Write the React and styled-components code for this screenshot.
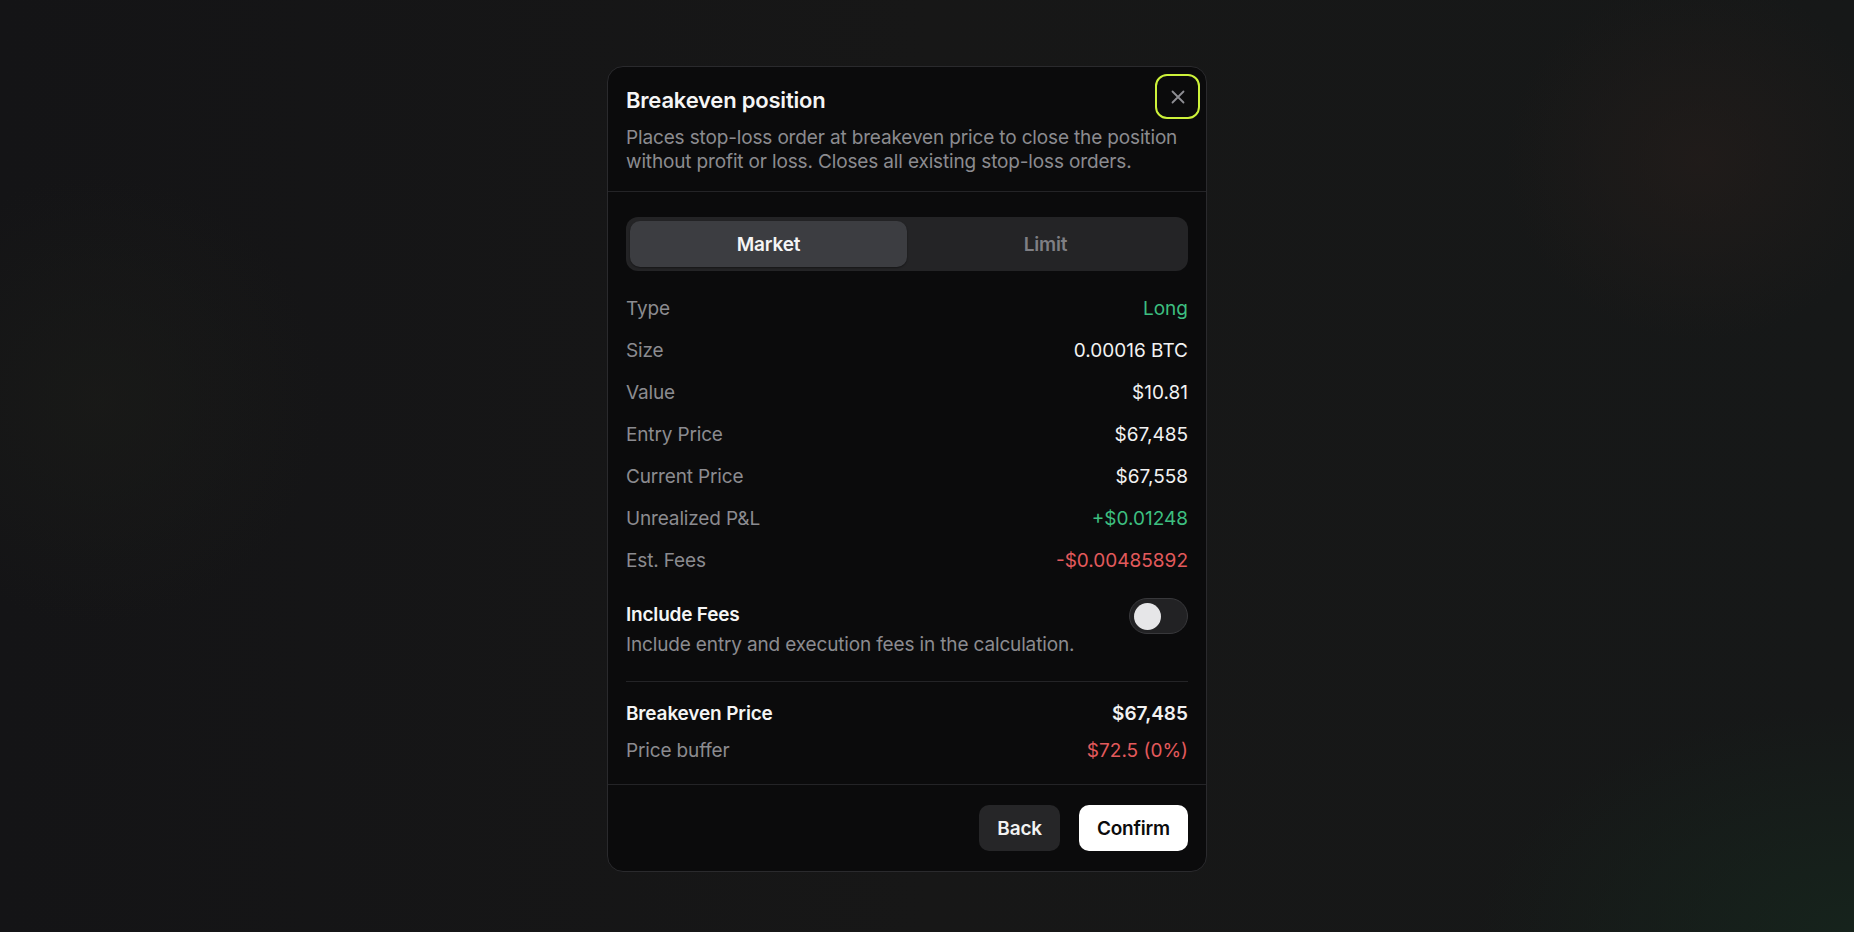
import React from "react";
import styled, { createGlobalStyle } from "styled-components";

const GlobalStyle = createGlobalStyle`
  * { box-sizing: border-box; }
  html, body {
    margin: 0;
    padding: 0;
    background: #141416;
    font-family: Inter, "Noto Sans", sans-serif;
    -webkit-font-smoothing: antialiased;
  }
`;

const Page = styled.div`
  min-height: 932px;
  display: flex;
  justify-content: center;
  align-items: flex-start;
  padding: 66px 40px 0 0;
  background:
    radial-gradient(ellipse 260px 240px at 1700px 160px, rgba(34, 28, 26, 0.8), transparent 75%),
    radial-gradient(ellipse 500px 300px at 1854px 932px, rgba(22, 40, 30, 0.7), transparent 75%),
    radial-gradient(ellipse 300px 300px at 100px 400px, rgba(26, 27, 24, 0.7), transparent 75%),
    linear-gradient(90deg, #141416 0%, #171717 50%, #161818 100%);
`;

const Modal = styled.div`
  position: relative;
  width: 600px;
  background: #0b0b0c;
  border: 1px solid #2a2a2d;
  border-radius: 16px;
  color: #f2f2f2;
`;

const Header = styled.div`
  padding: 18px 18px 17px;
  border-bottom: 1px solid #242427;
`;

const Title = styled.h2`
  margin: 0;
  font-size: 22px;
  line-height: 30px;
  font-weight: 600;
  letter-spacing: -0.2px;
  color: #f5f5f5;
`;

const Description = styled.p`
  margin: 11px 0 0;
  font-size: 19px;
  line-height: 24px;
  letter-spacing: -0.15px;
  color: #8b8b90;
`;

const CloseButton = styled.button`
  position: absolute;
  top: 7px;
  right: 6px;
  width: 45px;
  height: 45px;
  border: 2px solid #cdf23a;
  border-radius: 12px;
  background: transparent;
  display: flex;
  align-items: center;
  justify-content: center;
  padding: 0;
  cursor: pointer;
`;

const Body = styled.div`
  padding: 25px 18px 12px;
  border-bottom: 1px solid #242427;
`;

const Tabs = styled.div`
  display: grid;
  grid-template-columns: 1fr 1fr;
  padding: 4px;
  height: 54px;
  background: #242426;
  border-radius: 12px;
  margin-bottom: 16px;
`;

const Tab = styled.div`
  display: flex;
  align-items: center;
  justify-content: center;
  border-radius: 10px;
  font-size: 19px;
  font-weight: 600;
  letter-spacing: -0.2px;
  background: ${(p) => (p.$active ? "#3c3d41" : "transparent")};
  color: ${(p) => (p.$active ? "#f5f5f5" : "#7f7f84")};
  box-shadow: ${(p) => (p.$active ? "0 1px 2px rgba(0,0,0,0.4)" : "none")};
`;

const Row = styled.div`
  display: flex;
  justify-content: space-between;
  align-items: center;
  height: ${(p) => p.$h || 42}px;
  font-size: 19px;
`;

const Label = styled.span`
  color: ${(p) => (p.$strong ? "#f5f5f5" : "#8b8b90")};
  font-weight: ${(p) => (p.$strong ? 600 : 400)};
  letter-spacing: -0.15px;
`;

const Value = styled.span`
  color: ${(p) =>
    p.$tone === "green" ? "#3dbf80" : p.$tone === "red" ? "#e35a5c" : "#f2f2f2"};
  font-weight: ${(p) => (p.$strong ? 600 : 400)};
`;

const FeeBlock = styled.div`
  display: flex;
  justify-content: space-between;
  align-items: flex-start;
  margin-top: 20px;
  padding-bottom: 24px;
  border-bottom: 1px solid #242427;
`;

const FeeText = styled.div`
  display: flex;
  flex-direction: column;
`;

const FeeTitle = styled.span`
  font-size: 19px;
  line-height: 28px;
  font-weight: 600;
  letter-spacing: -0.2px;
  color: #f5f5f5;
`;

const FeeHint = styled.span`
  font-size: 19px;
  line-height: 24px;
  margin-top: 4px;
  letter-spacing: -0.15px;
  color: #8b8b90;
`;

const Toggle = styled.div`
  width: 59px;
  height: 36px;
  margin-top: -3px;
  border-radius: 18px;
  background: #222224;
  border: 1px solid #38383b;
  display: flex;
  align-items: center;
  padding: 0 4px;
`;

const Knob = styled.div`
  width: 27px;
  height: 27px;
  border-radius: 50%;
  background: #e6e6e8;
`;

const Summary = styled.div`
  padding-top: 16px;
`;

const Footer = styled.div`
  display: flex;
  justify-content: flex-end;
  gap: 19px;
  padding: 20px 18px;
`;

const Button = styled.button`
  height: 46px;
  padding: 0 18px;
  border: none;
  border-radius: 10px;
  font-family: Inter, "Noto Sans", sans-serif;
  font-size: 19px;
  font-weight: 600;
  letter-spacing: -0.2px;
  cursor: pointer;
  background: ${(p) => (p.$primary ? "#ffffff" : "#262628")};
  color: ${(p) => (p.$primary ? "#0b0b0c" : "#f2f2f2")};
`;

const rows = [
  { label: "Type", value: "Long", tone: "green" },
  { label: "Size", value: "0.00016 BTC" },
  { label: "Value", value: "$10.81" },
  { label: "Entry Price", value: "$67,485" },
  { label: "Current Price", value: "$67,558" },
  { label: "Unrealized P&L", value: "+$0.01248", tone: "green" },
  { label: "Est. Fees", value: "-$0.00485892", tone: "red" },
];

export default function App() {
  return (
    <>
      <GlobalStyle />
      <Page>
        <Modal>
          <Header>
            <Title>Breakeven position</Title>
            <Description>
              Places stop-loss order at breakeven price to close the position
              without profit or loss. Closes all existing stop-loss orders.
            </Description>
            <CloseButton aria-label="Close">
              <svg width="16" height="16" viewBox="0 0 16 16" fill="none">
                <path
                  d="M2.5 2.5l11 11M13.5 2.5l-11 11"
                  stroke="#8e8e93"
                  strokeWidth="1.8"
                  strokeLinecap="round"
                />
              </svg>
            </CloseButton>
          </Header>
          <Body>
            <Tabs>
              <Tab $active>Market</Tab>
              <Tab>Limit</Tab>
            </Tabs>
            {rows.map((r) => (
              <Row key={r.label}>
                <Label>{r.label}</Label>
                <Value $tone={r.tone}>{r.value}</Value>
              </Row>
            ))}
            <FeeBlock>
              <FeeText>
                <FeeTitle>Include Fees</FeeTitle>
                <FeeHint>Include entry and execution fees in the calculation.</FeeHint>
              </FeeText>
              <Toggle>
                <Knob />
              </Toggle>
            </FeeBlock>
            <Summary>
              <Row $h={30}>
                <Label $strong>Breakeven Price</Label>
                <Value $strong>$67,485</Value>
              </Row>
              <Row $h={44}>
                <Label>Price buffer</Label>
                <Value $tone="red">$72.5 (0%)</Value>
              </Row>
            </Summary>
          </Body>
          <Footer>
            <Button>Back</Button>
            <Button $primary>Confirm</Button>
          </Footer>
        </Modal>
      </Page>
    </>
  );
}
